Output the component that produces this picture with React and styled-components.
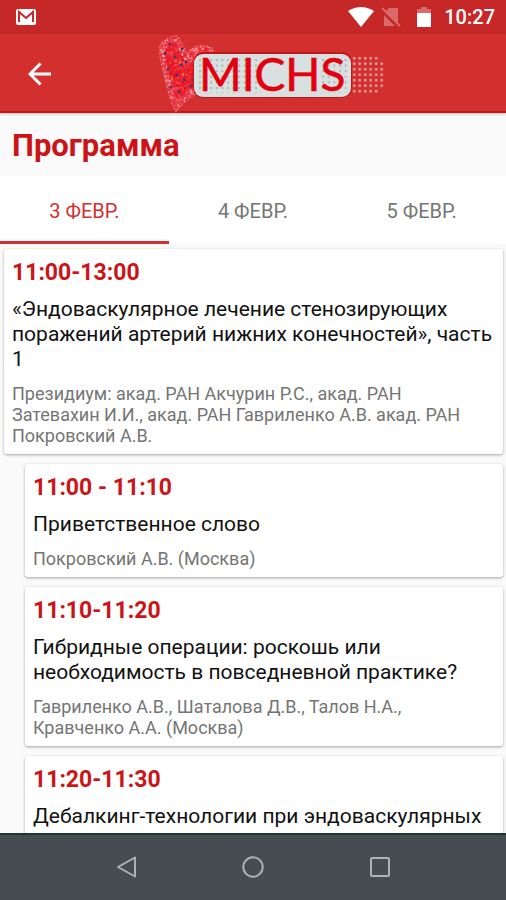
import styled, { createGlobalStyle } from "styled-components";

const tabs = ["3 ФЕВР.", "4 ФЕВР.", "5 ФЕВР."];

const sessions = [
  {
    time: "11:00-13:00",
    title:
      "«Эндоваскулярное лечение стенозирующих поражений артерий нижних конечностей», часть 1",
    people:
      "Президиум: акад. РАН Акчурин Р.С., акад. РАН Затевахин И.И., акад. РАН Гавриленко А.В. акад. РАН Покровский А.В.",
    main: true,
  },
  {
    time: "11:00 - 11:10",
    title: "Приветственное слово",
    people: "Покровский А.В. (Москва)",
  },
  {
    time: "11:10-11:20",
    title: "Гибридные операции: роскошь или необходимость в повседневной практике?",
    people: "Гавриленко А.В., Шаталова Д.В., Талов Н.А., Кравченко А.А. (Москва)",
  },
  {
    time: "11:20-11:30",
    title: "Дебалкинг-технологии при эндоваскулярных",
  },
];

const heart =
  "M19 2 C24 6 26 14 30 20 C36 11 47 10 56 15 C58 30 50 48 38 60 C30 65 24 71 19 77 C14 68 12 58 9 48 C7 36 3 28 3 15 C3 8 10 5 19 2Z";
const heartCore =
  "M17 7 C23 14 25 26 30 31 L42 22 L38 52 L20 65 C16 50 8 32 8 15Z";

const blueSpecks = [
  [13, 10], [25, 15], [8, 19], [18, 23], [24, 31], [29, 28],
  [20, 41], [14, 53], [27, 46], [34, 52], [36, 46], [22, 58], [11, 35],
];
const goldSpecks = [[19, 27], [23, 28], [15, 45], [26, 40], [20, 66]];

// small seeded generator so the logo looks the same on every render
let seed = 7;
const random = () => {
  seed = (seed * 16807) % 2147483647;
  return seed / 2147483647;
};
const makeSpecks = (count, colors) =>
  Array.from({ length: count }, () => ({
    x: random() * 60,
    y: random() * 80,
    r: 0.6 + random() * 0.7,
    fill: colors[Math.floor(random() * colors.length)],
  }));

const edgeSpecks = makeSpecks(900, ["#f8909a", "#f26a76", "#e3202c", "#f9b4ba", "#ee2430"]);
const coreSpecks = makeSpecks(400, ["#e60f1b", "#f01824", "#dc0d18", "#f04a55"]);

const Specks = ({ items }) =>
  items.map((s, i) => <circle key={i} cx={s.x} cy={s.y} r={s.r} fill={s.fill} />);

const Logo = () => (
  <LogoSvg viewBox="0 0 228 80" role="img" aria-label="MICHS">
    <defs>
      <pattern id="dots" x="41" y="24" width="5.6" height="5.6" patternUnits="userSpaceOnUse">
        <rect x="1" y="1" width="2" height="2" fill="#a9b4b7" />
      </pattern>
      <pattern id="tail" x="195" y="22" width="5.5" height="5.5" patternUnits="userSpaceOnUse">
        <rect x="1" y="1" width="2.4" height="2.4" fill="#dfa5a6" />
      </pattern>
      <clipPath id="heart">
        <path d={heart} />
      </clipPath>
      <clipPath id="core">
        <path d={heartCore} />
      </clipPath>
    </defs>
    <path
      d={heart}
      fill="none"
      stroke="#ee8088"
      strokeWidth="2"
      strokeDasharray="1 1.500 2 1.200"
    />
    <g clipPath="url(#heart)">
      <rect width="60" height="80" fill="#ea3f4b" />
      <Specks items={edgeSpecks} />
    </g>
    <g clipPath="url(#core)">
      <rect width="60" height="80" fill="#e60f1b" opacity="0.6" />
      <Specks items={coreSpecks} />
    </g>
    {blueSpecks.map(([x, y]) => (
      <circle key={`${x}-${y}`} cx={x} cy={y} r="1.5" fill="#4b3272" />
    ))}
    {goldSpecks.map(([x, y]) => (
      <circle key={`${x}-${y}`} cx={x} cy={y} r="1.2" fill="#e2782c" />
    ))}
    <path d="M195 22h27.500v5.500h5.500v27.500h-5.500v5.500h-27.500z" fill="url(#tail)" />
    <rect x="36" y="18" width="159" height="46" rx="10" fill="#c1161c" />
    <rect x="37" y="20" width="157" height="43" rx="9" fill="#d8e0e0" />
    <rect x="41" y="24" width="62" height="35" fill="url(#dots)" />
    <rect x="164" y="24" width="29" height="35" fill="url(#dots)" />
    <text
      x="42"
      y="57"
      fontFamily="Lato, sans-serif"
      fontSize="46"
      fill="#e3000f"
      stroke="#e3000f"
      strokeWidth="0.6"
    >
      MICHS
    </text>
  </LogoSvg>
);

const App = () => {
  return (
    <Screen>
      <GlobalStyle />
      <StatusBar>
        <svg width="22" height="18" viewBox="0 0 22 18" aria-hidden="true">
          <rect x="1" y="1" width="20" height="16" rx="2" fill="#fff" />
          <path d="M4 14V4l7 6 7-6v10" fill="none" stroke="#c62828" strokeWidth="2" />
        </svg>
        <StatusIcons>
          <svg width="26" height="20" viewBox="0 0 26 20" aria-hidden="true">
            <path d="M0 4Q13-4 26 4L13 20Z" fill="#fff" />
          </svg>
          <svg width="20" height="20" viewBox="0 0 20 20" aria-hidden="true">
            <path d="M8 1h9v18H3V6z" fill="#d86a6a" />
            <path d="M0 3l17 17" stroke="#c62828" strokeWidth="3" />
            <path d="M1 1l18 18" stroke="#d86a6a" strokeWidth="2" />
          </svg>
          <svg width="14" height="22" viewBox="0 0 14 22" aria-hidden="true">
            <path d="M4 1h6v2h4v5H0V3h4z" fill="#d86a6a" />
            <path d="M0 7h14v14H0z" fill="#fff" />
          </svg>
          <Clock>10:27</Clock>
        </StatusIcons>
      </StatusBar>
      <AppBar>
        <BackButton type="button" aria-label="Назад">
          <svg width="24" height="24" viewBox="0 0 24 24" aria-hidden="true">
            <path d="M23 12H2M12.500 1.500L2 12L12.500 22.500" fill="none" stroke="#fff" strokeWidth="3" />
          </svg>
        </BackButton>
        <Logo />
      </AppBar>
      <PageTitle>Программа</PageTitle>
      <Tabs role="tablist">
        {tabs.map((tab, i) => (
          <Tab key={tab} type="button" role="tab" aria-selected={i === 0} $active={i === 0}>
            {tab}
          </Tab>
        ))}
      </Tabs>
      <List>
        {sessions.map((s) => (
          <Card key={s.time} $main={s.main}>
            <Time>{s.time}</Time>
            <Title>{s.title}</Title>
            {s.people && <People>{s.people}</People>}
          </Card>
        ))}
      </List>
      <NavBar>
        <NavButton type="button" aria-label="Назад">
          <svg width="22" height="22" viewBox="0 0 22 22" aria-hidden="true">
            <path d="M20 1.500V20.500L3 11Z" />
          </svg>
        </NavButton>
        <NavButton type="button" aria-label="Домой">
          <svg width="22" height="22" viewBox="0 0 22 22" aria-hidden="true">
            <circle cx="11" cy="11" r="9.700" />
          </svg>
        </NavButton>
        <NavButton type="button" aria-label="Недавние">
          <svg width="22" height="22" viewBox="0 0 22 22" aria-hidden="true">
            <rect x="2" y="2" width="18" height="18" rx="1" />
          </svg>
        </NavButton>
      </NavBar>
    </Screen>
  );
};

export default App;

const GlobalStyle = createGlobalStyle`
  * {
    box-sizing: border-box;
  }
  body {
    margin: 0;
    font-family: Roboto, sans-serif;
    background: #fafafa;
  }
  button {
    border: none;
    background: none;
    padding: 0;
    font-family: inherit;
  }
`;

const Screen = styled.div`
  display: flex;
  flex-direction: column;
  height: 100vh;
`;

const StatusBar = styled.div`
  display: flex;
  justify-content: space-between;
  align-items: center;
  flex: none;
  height: 34px;
  padding: 0 11px 0 15px;
  background: #c62828;
`;

const StatusIcons = styled.div`
  display: flex;
  align-items: center;
  svg {
    margin-right: 7px;
  }
  svg:nth-child(2) {
    margin-right: 16px;
  }
`;

const Clock = styled.span`
  margin-left: 6px;
  color: #fff;
  font-size: 20px;
  font-weight: 500;
`;

const AppBar = styled.header`
  display: grid;
  grid-template-columns: 60px 1fr 24px;
  align-items: center;
  flex: none;
  height: 79px;
  background: #d32f2f;
  border-bottom: 2px solid #c4161c;
  box-shadow: 0 1px 3px rgba(0, 0, 0, 0.25);
`;

const BackButton = styled.button`
  display: flex;
  justify-content: flex-end;
  padding-right: 8px;
`;

const LogoSvg = styled.svg`
  width: 228px;
  height: 80px;
  justify-self: center;
`;

const PageTitle = styled.h1`
  flex: none;
  margin: 0;
  padding: 17px 12px 14px;
  color: #cc1417;
  font-size: 31px;
  font-weight: 700;
  line-height: 32px;
`;

const Tabs = styled.div`
  display: flex;
  flex: none;
  background: #fff;
`;

const Tab = styled.button`
  flex: 1;
  height: 68px;
  padding-top: 4px;
  border-bottom: 3px solid ${(p) => (p.$active ? "#d32f2f" : "transparent")};
  color: ${(p) => (p.$active ? "#d32f2f" : "#757575")};
  font-size: 20px;
`;

const List = styled.main`
  display: flex;
  flex-direction: column;
  gap: 10px;
  flex: 1;
  min-height: 0;
  overflow: hidden;
  padding: 5px 3px 0 4px;
`;

const Card = styled.article`
  flex: none;
  margin-left: ${(p) => (p.$main ? 0 : 21)}px;
  padding: 11px 8px 8px;
  background: #fff;
  border-radius: 3px;
  box-shadow: 0 1px 3px rgba(0, 0, 0, 0.35);
`;

const Time = styled.div`
  color: #cc1417;
  font-size: 23px;
  font-weight: 700;
  line-height: 26px;
`;

const Title = styled.h2`
  margin: 11px 0 0;
  color: #111;
  font-size: 21px;
  font-weight: 400;
  line-height: 25px;
`;

const People = styled.p`
  margin: 11px 0 0;
  padding-right: 8px;
  color: #757575;
  font-size: 18px;
  line-height: 21px;
`;

const NavBar = styled.nav`
  display: flex;
  justify-content: center;
  gap: 105px;
  flex: none;
  height: 67px;
  padding-bottom: 2px;
  background: #464d52;
  border-top: 2px solid #1e3632;
`;

const NavButton = styled.button`
  display: flex;
  align-items: center;
  svg {
    fill: none;
    stroke: #aeb2b4;
    stroke-width: 2;
    stroke-linejoin: round;
  }
`;
